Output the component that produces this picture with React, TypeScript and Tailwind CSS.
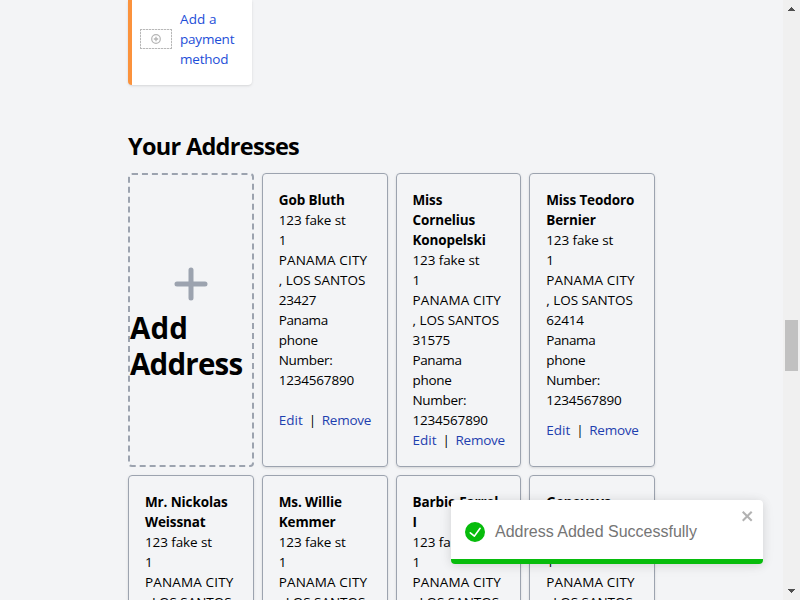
type Address = {
  name: string[];
  zip: string;
};

const addresses: Address[] = [
  { name: ['Gob Bluth'], zip: '23427' },
  { name: ['Miss', 'Cornelius', 'Konopelski'], zip: '31575' },
  { name: ['Miss Teodoro', 'Bernier'], zip: '62414' },
  { name: ['Mr. Nickolas', 'Weissnat'], zip: '48210' },
  { name: ['Ms. Willie', 'Kemmer'], zip: '90417' },
  { name: ['Barbie Farrel', 'I'], zip: '55120' },
  { name: ['Genoveva', 'Rau'], zip: '70213' },
];

function AddressCard({ address }: { address: Address }) {
  return (
    <div className="flex h-[294px] flex-col rounded border border-[#9ca3af] p-4 text-[13.5px] leading-5 whitespace-nowrap shadow-sm">
      <div className="font-bold tracking-[-0.12px]">
        {address.name.map((line) => (
          <p key={line}>{line}</p>
        ))}
      </div>
      <p className="tracking-[-0.1px]">123 fake st</p>
      <p>1</p>
      <p className="tracking-[0.15px]">PANAMA CITY</p>
      <p className="tracking-[-0.03px]">, LOS SANTOS</p>
      <p className="tracking-[-0.2px]">{address.zip}</p>
      <p className="tracking-[-0.4px]">Panama</p>
      <p className="tracking-[-0.3px]">phone</p>
      <p className="tracking-[-0.3px]">Number:</p>
      <p className="tracking-[-0.2px]">1234567890</p>
      <div className="flex flex-1 items-center">
        <a className="w-[23px] shrink-0 text-[#1e40af]">Edit</a>
        <span className="w-5 shrink-0 pl-[7px]">|</span>
        <a className="shrink-0 tracking-[-0.25px] text-[#1e40af]">Remove</a>
      </div>
    </div>
  );
}

function Toast() {
  return (
    <div className="absolute top-[500px] left-[451px] flex h-16 w-[312px] flex-col overflow-hidden rounded bg-white font-['Liberation_Sans',sans-serif] shadow-[0_1px_10px_0_rgba(0,0,0,0.1),0_2px_15px_0_rgba(0,0,0,0.05)]">
      <div className="flex flex-1 items-start pt-[22px] pl-[14px]">
        <svg viewBox="0 0 24 24" className="size-5 shrink-0" fill="#07bc0c">
          <path d="M12 0a12 12 0 1012 12A12.014 12.014 0 0012 0zm6.927 8.2l-6.845 9.289a1.011 1.011 0 01-1.43.188l-4.888-3.908a1 1 0 111.25-1.562l4.076 3.261 6.227-8.451a1 1 0 111.61 1.183z" />
        </svg>
        <p className="-mt-[2px] ml-[10px] text-base leading-6 whitespace-nowrap text-[#757575]">Address Added Successfully</p>
        <svg viewBox="0 0 14 16" className="-mt-[14px] mr-2 ml-auto h-4 w-[14px]" fill="#b2b2b2">
          <path
            fillRule="evenodd"
            d="M7.71 8.23l3.75 3.75-1.48 1.48-3.75-3.75-3.75 3.75L1 11.98l3.75-3.75L1 4.48 2.48 3l3.75 3.75L9.98 3l1.48 1.48-3.75 3.75z"
          />
        </svg>
      </div>
      <div className="h-[5px] bg-[#07bc0c]" />
    </div>
  );
}

function Scrollbar() {
  return (
    <div className="flex w-[17px] flex-col items-center bg-[#f0f0f0]">
      <svg className="mt-[7px] h-1 w-[7px]" viewBox="0 0 7 4" fill="#505050" shapeRendering="crispEdges">
        <path d="M3 0h1v1h1v1h1v1h1v1H0V3h1V2h1V1h1z" />
      </svg>
      <div className="mt-[309px] ml-[-1px] h-[51px] w-[13px] bg-[#c1c1c1]" />
      <svg className="mt-auto mb-[7px] h-1 w-[7px]" viewBox="0 0 7 4" fill="#505050" shapeRendering="crispEdges">
        <path d="M0 0h7v1H6v1H5v1H4v1H3V3H2V2H1V1H0z" />
      </svg>
    </div>
  );
}

export default function App() {
  return (
    <div className="relative flex h-[600px] w-[800px] overflow-hidden bg-[#f3f4f6] font-['Open_Sans','Noto_Sans',sans-serif] text-black">
      <main className="flex-1 pl-32">
        <div className="flex h-[85px] w-[124px] rounded-b border-l-4 border-[#fb923c] bg-white pt-[9px] pl-2 shadow-sm">
          <svg className="mt-5 h-5 w-8 shrink-0" viewBox="0 0 32 20" fill="none" stroke="#b5b5b5">
            <rect x="0.5" y="0.5" width="31" height="19" stroke="#e8e8e8" />
            <path d="M0 .5h32M0 19.5h32M.5 0v20M31.5 0v20" strokeDasharray="2 1" stroke="#b8b8b8" />
            <circle cx="16" cy="10" r="4.3" strokeWidth="1.2" />
            <path d="M13.8 10h4.4M16 7.8v4.4" strokeWidth="1.3" />
          </svg>
          <a className="ml-2 text-[13.5px] leading-5 tracking-[-0.2px] text-[#1d4ed8]">
            <span className="tracking-[0.1px]">Add a</span>
            <br />
            payment
            <br />
            method
          </a>
        </div>
        <h2 className="mt-[45px] text-[23.5px] leading-8 font-bold tracking-[-0.7px]">Your Addresses</h2>
        <div className="mt-[11px] grid w-[527px] grid-cols-4 gap-2">
          <div className="flex h-[294px] flex-col justify-center rounded border-2 border-dashed border-[#9ca3af]">
            <svg className="h-[52px] w-[52px] self-center" viewBox="0 0 52 52" stroke="#9ca3af" strokeWidth="5" strokeLinecap="round">
              <path d="M26 12v28M12 26h28" />
            </svg>
            <h1 className="text-[29.5px] leading-9 font-bold tracking-[-0.8px]">
              <span className="tracking-[0.1px]">Add</span>
              <br />
              Address
            </h1>
          </div>
          {addresses.map((address) => (
            <AddressCard key={address.zip} address={address} />
          ))}
        </div>
      </main>
      <Scrollbar />
      <Toast />
    </div>
  );
}
